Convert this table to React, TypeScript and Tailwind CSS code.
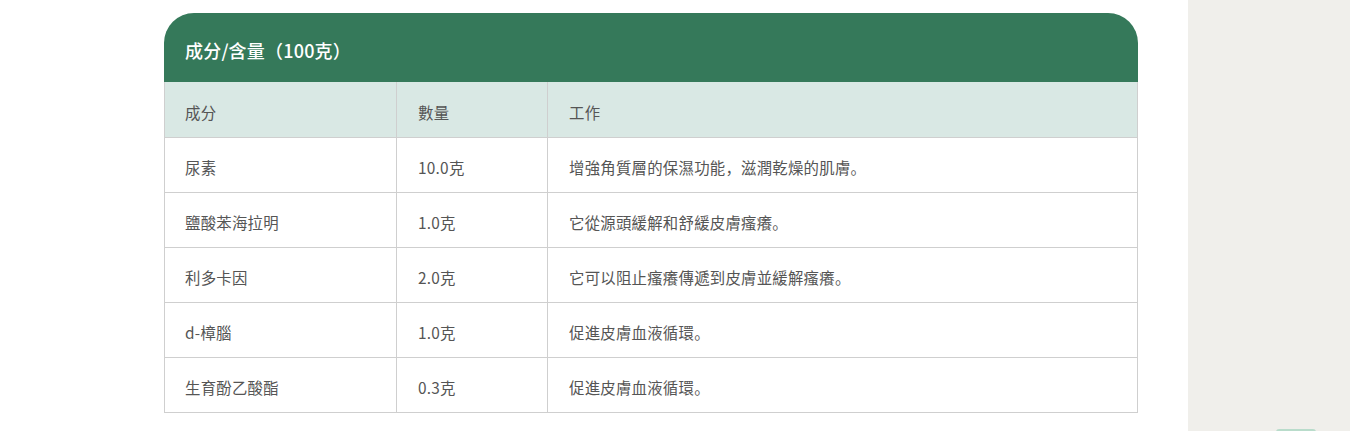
const rows = [
  { name: '尿素', qty: '10.0克', work: '增強角質層的保濕功能，滋潤乾燥的肌膚。' },
  { name: '鹽酸苯海拉明', qty: '1.0克', work: '它從源頭緩解和舒緩皮膚瘙癢。' },
  { name: '利多卡因', qty: '2.0克', work: '它可以阻止瘙癢傳遞到皮膚並緩解瘙癢。' },
  { name: 'd-樟腦', qty: '1.0克', work: '促進皮膚血液循環。' },
  { name: '生育酚乙酸酯', qty: '0.3克', work: '促進皮膚血液循環。' },
]

export default function App() {
  return (
    <div className="flex h-[431px] overflow-hidden bg-white text-[#555] font-['Noto_Sans_CJK_SC',sans-serif]">
      <main className="flex-1 pl-[164px] pt-[13px]">
        <div className="w-[974px]">
          <div className="h-[69px] flex items-center px-[21px] pt-[5px] rounded-t-[30px] bg-[#35795a] text-white text-[18px] tracking-[0.2px] font-medium">
            成分/含量（100克）
          </div>
          <table className="w-full border-collapse text-[15.4px] tracking-[0.25px] table-fixed">
            <colgroup>
              <col className="w-[232px]" />
              <col className="w-[151px]" />
              <col />
            </colgroup>
            <thead>
              <tr className="bg-[#d9e8e4] h-[55px]">
                <th className="border border-[#cfcfcf] border-t-0 text-left font-normal px-[20px] pt-[6px] pb-0">成分</th>
                <th className="border border-[#cfcfcf] border-t-0 text-left font-normal px-[21px] pt-[6px] pb-0">數量</th>
                <th className="border border-[#cfcfcf] border-t-0 text-left font-normal px-[21px] pt-[6px] pb-0">工作</th>
              </tr>
            </thead>
            <tbody>
              {rows.map(r => (
                <tr key={r.name} className="h-[55px]">
                  <td className="border border-[#cfcfcf] px-[20px] pt-[6px] pb-0">{r.name}</td>
                  <td className="border border-[#cfcfcf] px-[21px] pt-[6px] pb-0">{r.qty}</td>
                  <td className="border border-[#cfcfcf] px-[21px] pt-[6px] pb-0">{r.work}</td>
                </tr>
              ))}
            </tbody>
          </table>
        </div>
      </main>
      <aside className="w-[162px] bg-[#f0efeb] relative">
        <div className="absolute left-[88px] top-[429px] w-[40px] h-[6px] rounded-sm bg-[#b9dccb]" />
      </aside>
    </div>
  )
}
